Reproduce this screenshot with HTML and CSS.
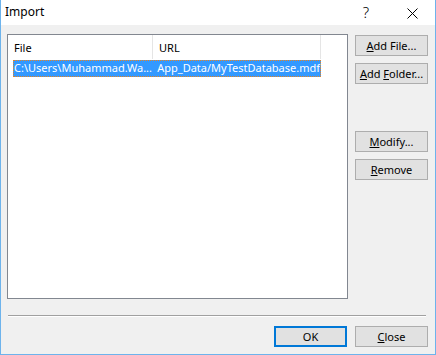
FILE: index.html
```html
<!DOCTYPE html>
<html lang="en">
<head>
  <meta charset="UTF-8" />
  <title>Import</title>
  <link rel="stylesheet" href="styles.css">
</head>
<body>
  <div class="window">
    <div class="titlebar">
      <span class="title">Import</span>
      <span class="caption-btn help">?</span>
      <span class="caption-btn close">
        <svg width="11" height="11" viewBox="0 0 11 11"><path d="M0.5 0.5 L10.5 10.5 M10.5 0.5 L0.5 10.5" stroke="#000" stroke-width="1" fill="none"/></svg>
      </span>
    </div>
    <div class="content">
      <div class="main">
        <div class="listview">
          <div class="lv-header">
            <div class="col col-file">File</div>
            <div class="col col-url">URL</div>
          </div>
          <div class="lv-row selected">
            <div class="cell cell-file">C:\Users\Muhammad.Wa...</div>
            <div class="cell cell-url">App_Data/MyTestDatabase.mdf</div>
          </div>
        </div>
        <div class="side">
          <button class="btn"><u>A</u>dd File...</button>
          <button class="btn"><u>A</u>dd <u>F</u>older...</button>
          <button class="btn spaced"><u>M</u>odify...</button>
          <button class="btn"><u>R</u>emove</button>
        </div>
      </div>
      <div class="separator"></div>
      <div class="footer">
        <button class="btn default">OK</button>
        <button class="btn"><u>C</u>lose</button>
      </div>
    </div>
  </div>
</body>
</html>
```
FILE: styles.css
```css
body {
  margin: 0;
  font-family: 'Noto Sans', sans-serif;
  font-size: 11px;
  color: #000;
  background: #fff;
}
.window {
  width: 436px;
  height: 355px;
  box-sizing: border-box;
  border: 1px solid #6db3ec;
  border-top: none;
  background: #f0f0f0;
  display: flex;
  flex-direction: column;
}
.titlebar {
  height: 25px;
  background: #fff;
  display: flex;
  align-items: center;
  flex-shrink: 0;
}
.title {
  flex: 1;
  padding-left: 4px;
  font-size: 12px;
  padding-bottom: 2px;
}
.caption-btn {
  width: 46px;
  height: 25px;
  display: flex;
  align-items: center;
  justify-content: center;
  box-sizing: border-box;
}
.caption-btn.help {
  font-size: 15px;
  font-weight: 300;
  padding-bottom: 1px;
}
.caption-btn.close {
  padding-top: 1px;
}
.content {
  padding: 9px 6px 0 6px;
  flex: 1;
}
.main {
  display: flex;
  gap: 7px;
}
.listview {
  width: 341px;
  height: 265px;
  box-sizing: border-box;
  border: 1px solid #828790;
  background: #fff;
}
.lv-header {
  display: flex;
  height: 24px;
}
.col {
  height: 24px;
  line-height: 25px;
  box-sizing: border-box;
  border-right: 1px solid #e5e5e5;
  padding-left: 6px;
}
.col-file {
  width: 145px;
}
.col-url {
  width: 168px;
}
.lv-row {
  display: flex;
  margin: 1px 0 0 5px;
  width: 308px;
  height: 17px;
  line-height: 14px;
  box-sizing: border-box;
}
.lv-row.selected {
  background: #3399ff;
  color: #fff;
  border: 1px dotted #e8821e;
}
.cell {
  white-space: nowrap;
}
.cell-file {
  width: 145px;
}
.side {
  display: flex;
  flex-direction: column;
  gap: 7px;
  padding-top: 1px;
}
.btn {
  width: 73px;
  height: 21px;
  box-sizing: border-box;
  border: 1px solid #adadad;
  background: #e1e1e1;
  font-family: 'Noto Sans', sans-serif;
  font-size: 11px;
  color: #000;
  padding: 0;
  line-height: 17px;
  white-space: nowrap;
}
.btn.spaced {
  margin-top: 40px;
}
.btn.default {
  border: 2px solid #0078d7;
}
.separator {
  margin: 16px 3px 0 1px;
  height: 1px;
  background: #a0a0a0;
  border-bottom: 1px solid #fff;
}
.footer {
  display: flex;
  justify-content: flex-end;
  gap: 8px;
  margin-top: 9px;
  padding-right: 1px;
}
```
